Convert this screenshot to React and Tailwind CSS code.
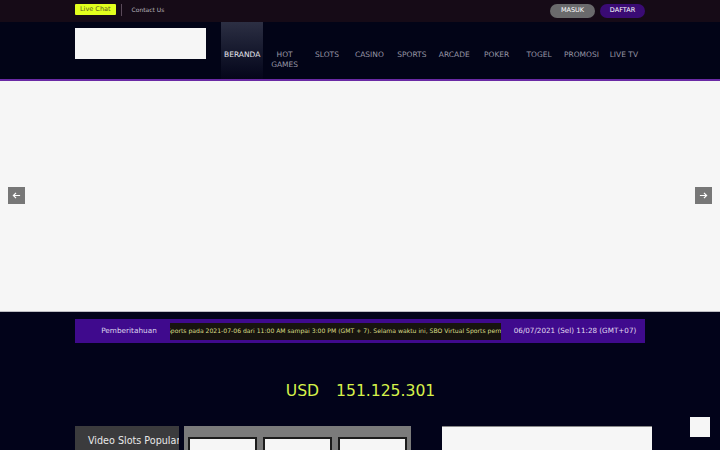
import React from "react";

const navItems = ["BERANDA", "HOT\nGAMES", "SLOTS", "CASINO", "SPORTS", "ARCADE", "POKER", "TOGEL", "PROMOSI", "LIVE TV"];

export default function App() {
  return (
    <div className="w-[720px] h-[450px] overflow-hidden bg-[#02031a] relative" style={{ fontFamily: '"DejaVu Sans", sans-serif' }}>
      {/* top bar */}
      <div className="h-[22px] bg-[#160b17]">
        <div className="w-[570px] mx-auto h-full flex items-center">
          <span className="bg-[#e2ff1e] text-[#5b5a1e] text-[6.5px] leading-[11px] px-[5px] rounded-[1px] mt-[-3px]">Live Chat</span>
          <span className="w-px h-[12px] bg-[#5a4a5a] ml-[5px] mt-[-2px]"></span>
          <span className="text-[#b8b3bb] text-[6px] ml-[10px] mt-[-3px]">Contact Us</span>
          <div className="ml-auto flex gap-[5px] mt-[-1px]">
            <span className="w-[45px] h-[14px] rounded-full bg-[#6a6a6c] text-white text-[6.5px] flex items-center justify-center">MASUK</span>
            <span className="w-[45px] h-[14px] rounded-full bg-[#3a0b74] text-white text-[6.5px] flex items-center justify-center">DAFTAR</span>
          </div>
        </div>
      </div>
      {/* nav */}
      <div className="h-[59px] bg-[#020417] border-b-[2px] border-[#6a2aa5]">
        <div className="w-[570px] mx-auto h-full flex">
          <div className="w-[131px] h-[31px] bg-[#f6f6f6] mt-[6px]"></div>
          <div className="flex flex-1 ml-[15px] h-full">
            {navItems.map((it, i) => (
              <div
                key={i}
                className={
                  "flex-1 text-center whitespace-pre text-[7.5px] leading-[10px] pt-[28px] " +
                  (i === 0 ? "bg-gradient-to-b from-[#2c2f43] to-[#05061a] text-[#e6e6ee]" : "text-[#9897a6]")
                }
              >
                {it}
              </div>
            ))}
          </div>
        </div>
      </div>
      {/* slider */}
      <div className="h-[231px] bg-[#f6f6f6] border-b border-[#bdbdc4] flex items-center justify-between px-[8px]">
        <div className="w-[17px] h-[17px] bg-[#777777] flex items-center justify-center mt-[-1px]">
          <svg width="9" height="9" viewBox="0 0 10 10" fill="none" stroke="white" strokeWidth="1.3">
            <path d="M9 5H1.5M4.5 2L1.5 5l3 3" />
          </svg>
        </div>
        <div className="w-[17px] h-[17px] bg-[#777777] flex items-center justify-center mt-[-1px]">
          <svg width="9" height="9" viewBox="0 0 10 10" fill="none" stroke="white" strokeWidth="1.3">
            <path d="M1 5h7.5M5.5 2l3 3-3 3" />
          </svg>
        </div>
      </div>
      {/* notice */}
      <div className="w-[570px] mx-auto mt-[7px] h-[24px] bg-[#3f0a8d] flex items-center">
        <div className="w-[95px] pl-[13px] text-center text-[7.3px] text-[#ddd6ee]">Pemberitahuan</div>
        <div className="w-[331px] h-[17px] bg-[#17140f] overflow-hidden flex items-center">
          <span className="whitespace-nowrap text-[6.1px] text-[#d9de86] ml-[-3px]">
            Sports pada 2021-07-06 dari 11:00 AM sampai 3:00 PM (GMT + 7). Selama waktu ini, SBO Virtual Sports permainan tidak akan tersedia.
          </span>
        </div>
        <div className="flex-1 text-center text-[7.2px] text-[#e0daf0] pl-[4px]">06/07/2021 (Sel) 11:28 (GMT+07)</div>
      </div>
      {/* jackpot */}
      <div className="mt-[38px] flex justify-center text-[15.6px] leading-[20px] text-[#d6f24a] gap-[17px] pl-[1px]">
        <span>USD</span>
        <span>151.125.301</span>
      </div>
      {/* bottom */}
      <div className="w-[577px] ml-[75px] mt-[25px] flex items-start">
        <div className="w-[104px] h-[30px] bg-[#3b3b3d] text-[#e8e8e8] text-[9.6px] pl-[13px] pt-[8px] overflow-hidden whitespace-nowrap">Video Slots Popular</div>
        <div className="w-[228px] h-[30px] bg-[#7b7b7b] ml-[5px] flex gap-[6px] px-[4px] pt-[11px]">
          <div className="flex-1 bg-[#f6f6f6] border-[2px] border-[#1c1c1c]"></div>
          <div className="flex-1 bg-[#f6f6f6] border-[2px] border-[#1c1c1c]"></div>
          <div className="flex-1 bg-[#f6f6f6] border-[2px] border-[#1c1c1c]"></div>
        </div>
        <div className="w-[210px] h-[30px] bg-[#f6f6f6] ml-[31px] border-t border-[#888]"></div>
      </div>
      <div className="absolute left-[690px] top-[417px] w-[20px] h-[20px] bg-[#f6f6f6]"></div>
    </div>
  );
}
